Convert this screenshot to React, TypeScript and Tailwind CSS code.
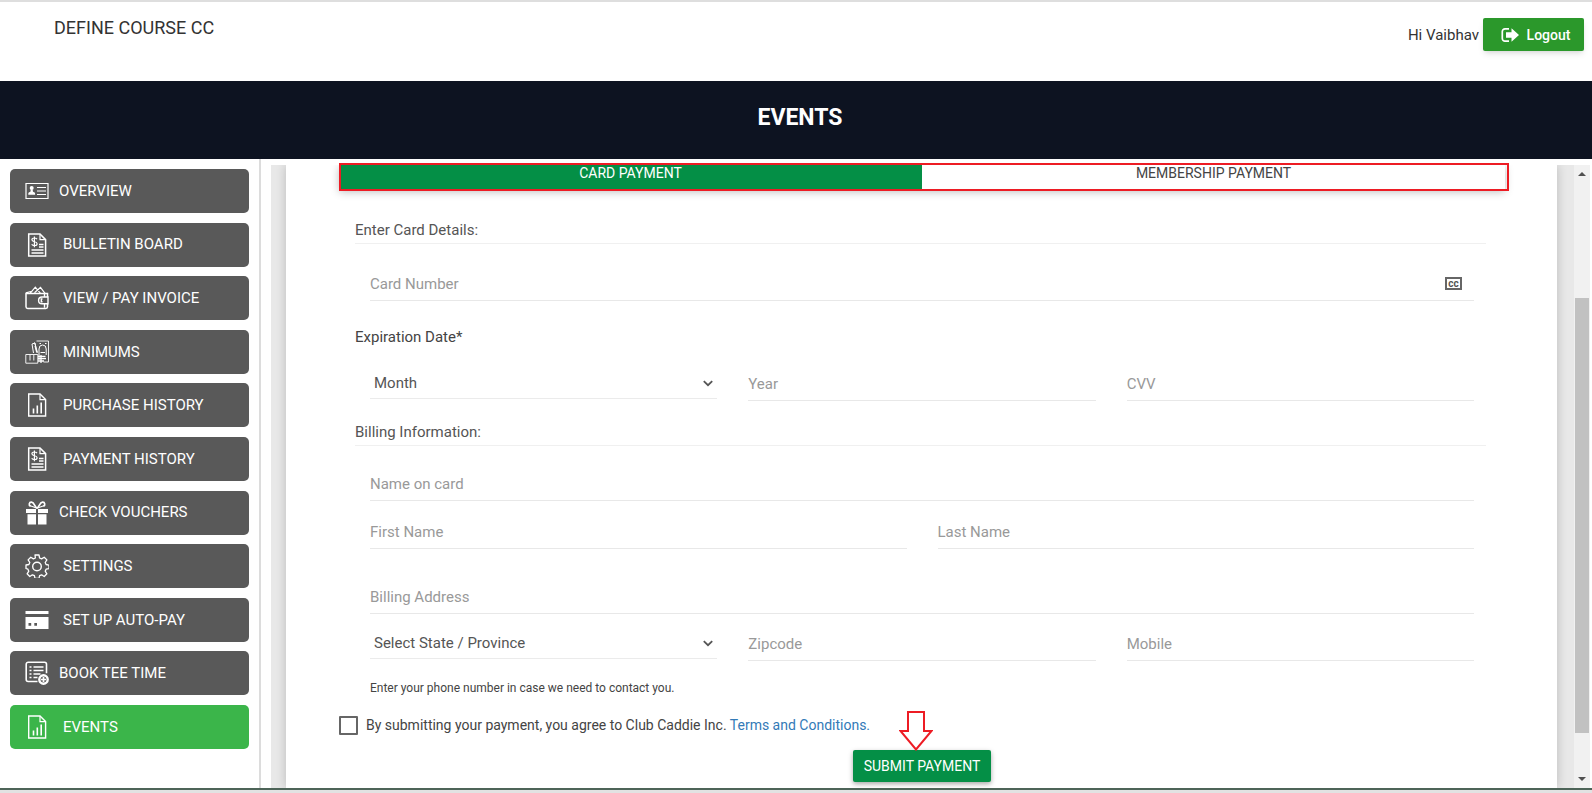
import { useState } from "react";
import type { ReactNode } from "react";

type IconProps = { children: ReactNode };

function Icon({ children }: IconProps) {
  return (
    <svg
      className="w-6 h-6 shrink-0"
      viewBox="0 0 24 24"
      fill="none"
      stroke="currentColor"
      strokeWidth={1.2}
      aria-hidden="true"
    >
      {children}
    </svg>
  );
}

const idCard = (
  <Icon>
    <path d="M1 4.5h22v15H1z" />
    <circle cx="6.7" cy="9" r="2" fill="currentColor" stroke="none" />
    <path d="M3.300 15.800v-1.300c0-1 1.600-1.500 2.200-2l.2-2h2l.2 2c.6.5 2.200 1 2.200 2v1.300z" fill="currentColor" stroke="none" />
    <path d="M12 8.5h9M12 12h9M12 15.5h9" />
  </Icon>
);

const invoiceDoc = (
  <Icon>
    <path d="M3.7 1h11.3l5.6 5.6V23H3.7z" strokeWidth={1.5} />
    <path d="M15 1v5.6h5.6" />
    <path d="M12 6.2c-.6-.9-1.5-1.2-2.6-1.2-1.5 0-2.5.7-2.5 1.8 0 2.6 5.2 1.3 5.2 3.9 0 1.2-1.1 1.9-2.6 1.9-1.3 0-2.3-.5-2.8-1.4M9.4 3.4v10.8" />
    <path d="M14 11.5h4.5M14 14h4.5M6.5 17h12M6.5 20h12" strokeWidth={1.4} />
  </Icon>
);

const chartDoc = (
  <Icon>
    <path d="M3.7 1h11.3l5.6 5.6V23H3.7z" strokeWidth={1.4} />
    <path d="M15 1v5.6h5.6" />
    <path d="M8.5 20.5v-5M12.3 20.5v-8M16.2 20.5V9.5" strokeWidth={1.6} />
  </Icon>
);

const wallet = (
  <Icon>
    <path d="M22.5 11V7.5H2.2A1.2 1.2 0 0 1 1 6.8v14c0 1 .8 1.7 1.7 1.7h18.1c1 0 1.7-.7 1.7-1.7v-3" strokeWidth={1.5} />
    <path d="M1 6.8 5.8 5.5M5.3 7.2l5-6 5 6M9.5 6.8l6-5.5 4.5 6" />
    <path d="M23 11h-6a3.3 3.3 0 0 0 0 6.8h6zM17.5 13h-1.2v2.8h1.2M19.5 7.5V11M19.5 17.8v4" strokeWidth={1.4} />
  </Icon>
);

const cash = (
  <Icon>
    <path d="M11.5 1h12v21h-5" strokeWidth={0.9} />
    <path d="M14 20V9a3.6 4 0 0 1 7.2 0v6M15.5 12.5h4.5M14.5 3.5h1.5M20 3.500h1.500" strokeWidth={1} />
    <path d="m7 4 3-1 2 10M8.5 13 7 4M10 6l1.5 6M9.5 2.5l3 10" strokeWidth={1} />
    <path d="M.8 14.5h12v8.7H.8zM5 14.5v6M8.8 14.5v6" strokeWidth={0.9} />
    <path d="M13 16.5h7.5M13 18.7h8M13 21h6M16 15v8" strokeWidth={1.3} />
  </Icon>
);

const gift = (
  <Icon>
    <path
      d="M1 8h10v4H1zM13 8h10v4H13zM2.500 13.200H11V23.500H2.500zM13 13.200h8.500V23.500H13z"
      fill="currentColor"
      stroke="none"
    />
    <path d="M12 7.200C10 6.500 9.500 1.500 6.500 1.200 4 1 3.400 4.300 5.600 5.300M12 7.200c2-.7 2.500-5.700 5.500-6 2.500-.2 3.100 3.100.9 4.100" strokeWidth={1.700} />
    <path d="m4.500 4.500 7 2.500M19.500 4.500l-7 2.500" />
  </Icon>
);

const gear = (
  <Icon>
    <path
      d="M10 1h4l.6 3 2 .9 2.600-1.700 2.700 2.700-1.700 2.600.9 2 2.900.6v3.500l-2.900.6-.9 2 1.700 2.600-2.700 2.700-2.600-1.700-2 .9-.6 2.800h-4l-.6-2.800-2-.9-2.600 1.700-2.700-2.700 1.700-2.600-.9-2L1 14.500V11l2.900-.5.9-2-1.700-2.600 2.700-2.700 2.600 1.700 2-.9z"
      strokeWidth={1.300}
      strokeLinejoin="round"
    />
    <circle cx="12" cy="12.500" r="4.300" strokeWidth={1.400} />
  </Icon>
);

const creditCard = (
  <Icon>
    <path d="M.5 3h23v3H.5z" fill="currentColor" stroke="none" />
    <path
      d="M.5 9h23v12H.5zM3.500 15v2.700h2.700V15zM9.300 15v2.700H12V15z"
      fill="currentColor"
      fillRule="evenodd"
      stroke="none"
    />
  </Icon>
);

const listAdd = (
  <Icon>
    <path d="M12.500 20.500H3.200a2 2 0 0 1-2-2V3.200a2 2 0 0 1 2-2h16.300a2 2 0 0 1 2 2v9" strokeWidth={1.600} />
    <path d="M4.500 6h2M4.500 9.500h2M4.500 13h2M4.500 16.500h2M8.500 6h10M8.500 9.500h10M8.500 13h7M8.500 16.500h4" strokeWidth={1.700} />
    <circle cx="18.500" cy="18.500" r="4.200" strokeWidth={2.400} />
    <path d="M18.500 16v5M16 18.500h5" strokeWidth={1.700} />
  </Icon>
);

const NAV_ITEMS = [
  { label: "OVERVIEW", icon: idCard, tight: true },
  { label: "BULLETIN BOARD", icon: invoiceDoc },
  { label: "VIEW / PAY INVOICE", icon: wallet },
  { label: "MINIMUMS", icon: cash },
  { label: "PURCHASE HISTORY", icon: chartDoc },
  { label: "PAYMENT HISTORY", icon: invoiceDoc },
  { label: "CHECK VOUCHERS", icon: gift, tight: true },
  { label: "SETTINGS", icon: gear },
  { label: "SET UP AUTO-PAY", icon: creditCard },
  { label: "BOOK TEE TIME", icon: listAdd, tight: true },
  { label: "EVENTS", icon: chartDoc, active: true },
];

function Header() {
  return (
    <header className="h-[81px] shrink-0 flex items-start justify-between pl-[54px] pr-2 pt-4 bg-white border-t-2 border-[#dedede]">
      <span className="text-lg leading-5 text-[#333333]">DEFINE COURSE CC</span>
      <div className="flex items-center gap-1">
        <span className="pt-0.5 text-[15px] text-[#333333]">Hi Vaibhav</span>
        <button className="h-[33px] w-[101px] flex items-center justify-center gap-2 pl-1 rounded-xs bg-[#2b982b] text-white text-sm font-medium shadow-md">
          <svg className="w-[18px] h-4" viewBox="0 0 18 16" aria-hidden="true">
            <path d="M8 1.800H4A2.700 2.700 0 0 0 1.300 4.500v7A2.700 2.700 0 0 0 4 14.200h4" fill="none" stroke="currentColor" strokeWidth="1.700" />
            <path d="M5 5.300h5.500V1.300L18 8l-7.500 6.700v-4H5z" fill="currentColor" />
          </svg>
          Logout
        </button>
      </div>
    </header>
  );
}

function Sidebar() {
  return (
    <nav className="w-[261px] shrink-0 flex flex-col justify-between pt-2.5 pb-[39px] pl-2.5 pr-2.5 border-r-2 border-[#dcdcdc]">
      {NAV_ITEMS.map((item) => (
        <button
          key={item.label}
          className={`h-11 flex items-center rounded-[5px] pl-[15px] text-[15px] text-white ${
            item.tight ? "gap-2.5" : "gap-3.5"
          } ${item.active ? "bg-[#3bb54a]" : "bg-[#595959]"}`}
        >
          {item.icon}
          {item.label}
        </button>
      ))}
    </nav>
  );
}

function Field({ label }: { label: string }) {
  return (
    <input
      type="text"
      aria-label={label}
      placeholder={label}
      className="block w-full h-8 pb-0.5 self-start border-b border-[#e8e8e8] bg-transparent text-[15px] text-[#444444] placeholder:text-[#999999] outline-none"
    />
  );
}

function SelectField({ label, options }: { label: string; options: string[] }) {
  return (
    <div className="relative self-start">
      <select
        aria-label={label}
        className="block w-full h-[30px] appearance-none border-b border-[#ebebeb] bg-transparent pl-1 text-[15px] text-[#555555] outline-none"
      >
        <option>{label}</option>
        {options.map((o) => (
          <option key={o}>{o}</option>
        ))}
      </select>
      <svg
        className="absolute right-1 top-2.5 w-2.5 h-2.5 text-[#555555] pointer-events-none"
        viewBox="0 0 10 10"
        fill="none"
        stroke="currentColor"
        strokeWidth="1.8"
        aria-hidden="true"
      >
        <path d="m.8 2.200 4.200 4 4.200-4" />
      </svg>
    </div>
  );
}

function SectionTitle({ children }: { children: ReactNode }) {
  return (
    <h2 className="h-6 border-b border-[#f0f0f0] text-[15px] leading-5 text-[#555555]">{children}</h2>
  );
}

function PaymentForm() {
  const [tab, setTab] = useState("card");
  const [agreed, setAgreed] = useState(false);

  const tabClass = (name: string) =>
    `flex-1 h-[25px] pb-2.5 text-sm leading-4 ${
      tab === name ? "bg-[#048f46] text-white" : "bg-white text-[#444444]"
    }`;

  return (
    <form className="pl-[53px] pr-[52px]" onSubmit={(e) => e.preventDefault()}>
      <div className="flex shadow-[0_2px_8px_rgba(0,0,0,0.25)]">
        <button type="button" className={tabClass("card")} onClick={() => setTab("card")}>
          CARD PAYMENT
        </button>
        <button type="button" className={tabClass("membership")} onClick={() => setTab("membership")}>
          MEMBERSHIP PAYMENT
        </button>
      </div>

      <div className="pl-4 pr-[19px] mt-[30px]">
        <SectionTitle>Enter Card Details:</SectionTitle>
        <div className="relative mt-[25px] pl-[15px] pr-3">
          <Field label="Card Number" />
          <span className="absolute right-6 top-2 h-[13px] w-[17px] flex items-center justify-center border-2 border-[#666666] text-[10px] leading-none font-bold text-[#555555]">
            cc
          </span>
        </div>

        <h2 className="mt-[26px] text-[15px] leading-5 text-[#444444]">Expiration Date*</h2>
        <div className="mt-[22px] pl-[15px] pr-3 grid grid-cols-3 gap-[31px]">
          <SelectField label="Month" options={["January", "February", "March"]} />
          <Field label="Year" />
          <Field label="CVV" />
        </div>

        <div className="mt-[21px]">
          <SectionTitle>Billing Information:</SectionTitle>
        </div>
        <div className="mt-[23px] pl-[15px] pr-3">
          <Field label="Name on card" />
          <div className="mt-4 grid grid-cols-2 gap-[31px]">
            <Field label="First Name" />
            <Field label="Last Name" />
          </div>
          <div className="mt-[33px]">
            <Field label="Billing Address" />
          </div>
          <div className="mt-[15px] grid grid-cols-3 gap-[31px]">
            <SelectField label="Select State / Province" options={["Michigan", "Ohio", "Ontario"]} />
            <Field label="Zipcode" />
            <Field label="Mobile" />
          </div>
          <p className="mt-[17px] text-xs leading-5 text-[#444444]">
            Enter your phone number in case we need to contact you.
          </p>
        </div>
      </div>

      <div className="mt-[17px] flex items-center gap-2 text-sm leading-5 text-[#444444]">
        <input
          id="agree"
          type="checkbox"
          checked={agreed}
          onChange={(e) => setAgreed(e.target.checked)}
          className="w-[19px] h-[19px] appearance-none rounded-[1px] border-2 border-[#666666] checked:bg-[#048f46]"
        />
        <span>
          <label htmlFor="agree">By submitting your payment, you agree to Club Caddie Inc.</label>{" "}
          <a href="#terms" className="text-[#337ab7]">
            Terms and Conditions.
          </a>
        </span>
      </div>

      <div className="mt-[15px] flex justify-center">
        <button
          type="submit"
          className="relative h-8 px-[11px] rounded-xs bg-[#048f46] text-sm text-white shadow-[0_2px_5px_rgba(0,0,0,0.35)]"
        >
          SUBMIT PAYMENT
          <svg
            className="absolute left-[46px] bottom-[31px] w-[34px] h-[41px]"
            viewBox="0 0 34 41"
            fill="#ffffff"
            stroke="#ed1c24"
            strokeWidth="2"
            aria-hidden="true"
          >
            <path d="M9 2h16v19h7.500L17 39.500 1.500 21H9z" />
          </svg>
        </button>
      </div>
    </form>
  );
}

function Scrollbar() {
  return (
    <div className="w-4 mr-0.5 shrink-0 flex flex-col items-center bg-[#f1f1f1]" aria-hidden="true">
      <svg className="w-2 h-1 mt-[7px]" viewBox="0 0 8 4">
        <path d="M4 0l4 4H0z" fill="#505050" />
      </svg>
      <div className="mt-[122px] mb-11 flex-1 w-3.5 bg-[#c1c1c1]" />
      <svg className="w-2 h-1 mb-[7px]" viewBox="0 0 8 4">
        <path d="M4 4l4-4H0z" fill="#505050" />
      </svg>
    </div>
  );
}

export default function App() {
  return (
    <div className="min-h-screen flex flex-col bg-white font-[Roboto,'Liberation_Sans',sans-serif]">
      <Header />
      <div className="h-[78px] shrink-0 flex items-center justify-center pl-2 pb-1 bg-[#0d1321]">
        <h1 className="text-[23px] font-bold text-white">EVENTS</h1>
      </div>
      <div className="flex-1 flex">
        <Sidebar />
        <main className="relative flex-1 flex ml-2.5 pt-1.5">
          <div className="flex-1 flex pl-[15px] pr-[17px] overflow-hidden bg-[#e8e8e8]">
            <div className="flex-1 bg-white shadow-[0_0_10px_rgba(0,0,0,0.2)] pb-1.5">
              <PaymentForm />
            </div>
          </div>
          <Scrollbar />
          {/* highlight around the payment type tabs */}
          <div className="absolute left-[68px] right-[83px] top-1 h-7 border-2 border-[#ed1c24] pointer-events-none" />
        </main>
      </div>
      <footer className="h-[5px] shrink-0 border-t-2 border-[#4d6458] bg-[#e2e2e2]" />
    </div>
  );
}
